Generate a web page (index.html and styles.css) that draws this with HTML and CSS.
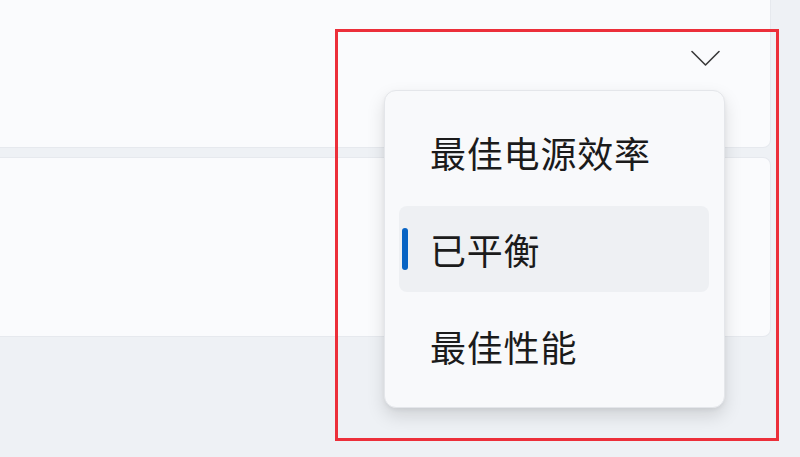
FILE: index.html
```html
<!DOCTYPE html>
<html lang="zh-CN">
<head>
  <meta charset="UTF-8">
  <meta name="viewport" content="width=device-width, initial-scale=1.0">
  <title>电源模式</title>
  <link rel="stylesheet" href="styles.css">
</head>
<body>
  <div class="page">
    <!-- Settings cards -->
    <div class="card card-top"></div>
    <div class="card card-bottom"></div>

    <!-- Dropdown chevron of the power mode combo box -->
    <svg class="chevron" width="30" height="18" viewBox="0 0 30 18">
      <polyline points="1,1.5 14.5,15 28,1.5" fill="none" stroke="#3a3a3a" stroke-width="1.6" stroke-linecap="round" stroke-linejoin="round"/>
    </svg>

    <!-- Open flyout menu -->
    <div class="menu">
      <div class="menu-item">最佳电源效率</div>
      <div class="menu-item selected">已平衡</div>
      <div class="menu-item">最佳性能</div>
    </div>

    <!-- Highlight annotation -->
    <div class="highlight"></div>
  </div>
</body>
</html>
```

FILE: styles.css
```css
html, body {
  margin: 0;
  height: 100%;
}

body {
  background-color: #eef1f5;
  font-family: "Noto Sans CJK SC", "Noto Sans", sans-serif;
  overflow: hidden;
}

.page {
  position: relative;
  width: 800px;
  height: 457px;
  display: flow-root;
}

.card {
  width: 780px;
  margin-left: -10px;
  background-color: #fafbfd;
  border-radius: 7px;
  box-shadow: 0 0 0 1px #e6e9ee;
}

.card-top {
  height: 147px;
  border-top-left-radius: 0;
  border-top-right-radius: 0;
}

.card-bottom {
  height: 178px;
  margin-top: 11px;
}

.chevron {
  position: absolute;
  left: 691px;
  top: 50px;
}

.menu {
  position: absolute;
  left: 384px;
  top: 90px;
  width: 341px;
  box-sizing: border-box;
  padding: 18px 15px 18px 14px;
  display: flex;
  flex-direction: column;
  gap: 11px;
  background-color: #f8f9fb;
  border: 1px solid #e4e6ea;
  border-radius: 12px;
  box-shadow: 0 8px 18px rgba(0, 0, 0, 0.13), 0 2px 4px rgba(0, 0, 0, 0.05);
}

.menu-item {
  position: relative;
  height: 86px;
  display: flex;
  align-items: center;
  padding-left: 31px;
  font-size: 36px;
  color: #1b1b1b;
  border-radius: 8px;
  letter-spacing: 0.8px;
}

.menu-item.selected {
  background-color: #eef0f3;
}

.menu-item.selected::before {
  content: "";
  position: absolute;
  left: 3px;
  top: 22px;
  width: 6px;
  height: 42px;
  border-radius: 3px;
  background-color: #0763c4;
}

.highlight {
  position: absolute;
  left: 335px;
  top: 29px;
  width: 438px;
  height: 406px;
  border: 3px solid #ec2f3a;
}
```
